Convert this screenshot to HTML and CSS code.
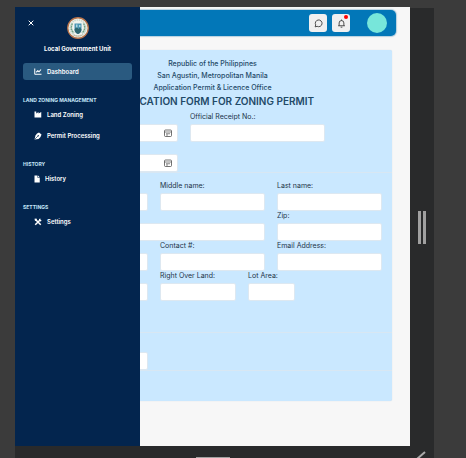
FILE: index.html
```html
<!DOCTYPE html>
<html lang="en">
<head>
<meta charset="utf-8">
<meta name="viewport" content="width=device-width, initial-scale=1">
<title>Zoning Permit</title>
<link rel="stylesheet" href="styles.css">
</head>
<body>
<div class="device">
  <div class="screen">
    <aside class="sidebar">
      <div class="brand">
        <button class="close" type="button" aria-label="Close menu">
          <svg viewBox="0 0 6 6" width="6" height="6"><path d="M.7.7l4.6 4.6M5.3.7L.7 5.3" stroke="#fff" stroke-width="1"/></svg>
        </button>
        <svg class="seal" viewBox="0 0 44 44" width="22" height="22">
          <circle cx="22" cy="22" r="20.5" fill="#f1f3ee" stroke="#b9744a" stroke-width="2.6"/>
          <circle cx="22" cy="22" r="16" fill="none" stroke="#c9d8cd" stroke-width="3" stroke-dasharray="3 1.5"/>
          <path d="M11 13c-4 7-3 14 3 19M33 13c4 7 3 14-3 19" fill="none" stroke="#6fa288" stroke-width="3" stroke-dasharray="4 1"/>
          <path d="M15 13h14v12c0 5-4 8-7 9-3-1-7-4-7-9z" fill="#4a95b4"/>
          <path d="M15 25l4-6 4 5 3-3 3 4c0 5-4 8-7 9-3-1-7-4-7-9z" fill="#2d6670"/>
          <path d="M18 15h3v6h-3zM24 16h3v4h-3z" fill="#a9d5df"/>
          <path d="M13 36c6 3 12 3 18 0" fill="none" stroke="#c3b69b" stroke-width="2"/>
        </svg>
        <span>Local Government Unit</span>
      </div>
      <nav class="menu">
        <a class="item active" href="#">
          <svg viewBox="0 0 16 14" width="8" height="7"><path d="M1.5 1v11.5H15" fill="none" stroke="#fff" stroke-width="2"/><path d="M4.5 8.5l3-3 2.5 2 4-4.5" fill="none" stroke="#fff" stroke-width="2.2"/></svg>
          Dashboard
        </a>
        <h2>LAND ZONING MANAGEMENT</h2>
        <a class="item" href="#">
          <svg viewBox="0 0 16 14" width="8" height="7"><path d="M1 1h3.500v4L9 2v3l5.500-3v11H1z" fill="#fff"/></svg>
          Land Zoning
        </a>
        <a class="item" href="#">
          <svg viewBox="0 0 16 16" width="8" height="8"><path d="M10 1l5 4-2 5-4 4-8 1L3 7l3-4z" fill="#fff"/><path d="M1.500 14.500L8 8" stroke="#03254e" stroke-width="1.300"/><circle cx="8.500" cy="7.500" r="1.300" fill="#03254e"/></svg>
          Permit Processing
        </a>
        <h2>HISTORY</h2>
        <a class="item" href="#">
          <svg viewBox="0 0 12 16" width="6" height="8"><path d="M1 1h6v4.500h4.500V15H1z" fill="#fff"/><path d="M8 1l3.500 3.500H8z" fill="#fff"/></svg>
          History
        </a>
        <h2>SETTINGS</h2>
        <a class="item" href="#">
          <svg viewBox="0 0 16 16" width="8" height="8"><path d="M3 3l10.500 10.500M13 3L2.500 13.500" stroke="#fff" stroke-width="3"/><path d="M1 1.500l4-.5 1 4-4 1zM10 2l3-1-1 3 3 0-1 3-4-1z" fill="#fff"/></svg>
          Settings
        </a>
      </nav>
    </aside>

    <main class="page">
      <header class="topbar">
        <button class="tool" type="button" aria-label="Messages">
          <svg viewBox="0 0 16 16" width="9" height="9"><path d="M2 14l1-3.500A6 6 0 1 1 5.500 13z" fill="none" stroke="#333" stroke-width="1.500" stroke-linejoin="round"/></svg>
        </button>
        <button class="tool" type="button" aria-label="Notifications">
          <svg viewBox="0 0 16 16" width="9" height="9"><path d="M2 12h12M3.800 12V7a4.200 4.200 0 0 1 8.400 0v5M6.500 14.500h3M8 1v2" fill="none" stroke="#333" stroke-width="1.500"/></svg>
          <i class="dot"></i>
        </button>
        <button class="avatar" type="button" aria-label="Account"></button>
      </header>

      <form class="card">
        <div class="letterhead">
          <p>Republic of the Philippines</p>
          <p>San Agustin, Metropolitan Manila</p>
          <p>Application Permit &amp; Licence Office</p>
          <h1>APPLICATION FORM FOR ZONING PERMIT</h1>
        </div>
        <section class="receipt">
          <div class="field">
            <div class="date"><input type="text" aria-label="Date"><svg viewBox="0 0 16 16" width="8" height="8"><rect x="1" y="2" width="14" height="13" rx="2" fill="none" stroke="#444" stroke-width="1.500"/><path d="M1 6h14M4 9.500h8M4 12h4" stroke="#444" stroke-width="1.300"/></svg></div>
          </div>
          <div class="field"><label for="receipt">Official Receipt No.:</label><input id="receipt" type="text"></div>
          <div class="field">
            <div class="date"><input type="text" aria-label="Date issued"><svg viewBox="0 0 16 16" width="8" height="8"><rect x="1" y="2" width="14" height="13" rx="2" fill="none" stroke="#444" stroke-width="1.500"/><path d="M1 6h14M4 9.500h8M4 12h4" stroke="#444" stroke-width="1.300"/></svg></div>
          </div>
        </section>
        <section class="applicant">
          <div class="field"><input type="text" aria-label="First name"></div>
          <div class="field"><label for="middle">Middle name:</label><input id="middle" type="text"></div>
          <div class="field"><label for="last">Last name:</label><input id="last" type="text"></div>
          <div class="field wide"><input type="text" aria-label="Address"></div>
          <div class="field"><label for="zip">Zip:</label><input id="zip" type="text"></div>
          <div class="field"><input type="text" aria-label="Phone"></div>
          <div class="field"><label for="contact">Contact #:</label><input id="contact" type="text"></div>
          <div class="field"><label for="email">Email Address:</label><input id="email" type="text"></div>
          <div class="field"><input type="text" aria-label="Location"></div>
          <div class="land">
            <div class="field"><label for="right">Right Over Land:</label><input id="right" type="text"></div>
            <div class="field"><label for="lot">Lot Area:</label><input id="lot" type="text"></div>
          </div>
        </section>
        <section class="extra">
          <div class="field"><input type="text" aria-label="Remarks"></div>
        </section>
        <section class="actions"></section>
      </form>
    </main>
  </div>
  <div class="grip right"><i></i><i></i></div>
  <div class="grip bottom"><i></i></div>
  <div class="grip corner"><svg viewBox="0 0 12 12" width="12" height="12"><path d="M1 13L9 6" stroke="#aaa" stroke-width="2"/></svg></div>
</div>
</body>
</html>
```

FILE: styles.css
```css
* { box-sizing: border-box; }

body {
  margin: 0;
  background: #3b3b3b;
  font-family: Inter, "Liberation Sans", sans-serif;
  font-size: 7px;
  color: #1d3347;
}

h1, h2, p { margin: 0; }

button { border: 0; padding: 0; font: inherit; }

svg { display: block; flex: none; }

.device {
  display: grid;
  grid-template-columns: 1fr 24px;
  grid-template-rows: 1fr 12px;
  height: 100vh;
  padding: 7px 32px 0 15px;
}

.screen {
  position: relative;
  background: #f7f7f7;
  overflow: hidden;
}

/* Sidebar drawer */
.sidebar {
  position: absolute;
  inset: 0 auto 0 0;
  z-index: 2;
  width: 125px;
  padding: 10px 8px;
  background: #03254e;
  color: #fff;
  font-size: 6px;
}

.brand {
  position: relative;
  display: flex;
  flex-direction: column;
  align-items: center;
  gap: 5px;
  font-weight: 700;
  line-height: 10px;
}

.close {
  position: absolute;
  top: 3px;
  left: 5px;
  background: none;
}

.menu { display: flex; flex-direction: column; margin-top: 9px; }

.menu h2 {
  margin: 14px 0 0;
  font-size: 5px;
  font-weight: 700;
  line-height: 8px;
  color: #c5e6f8;
}

.item {
  display: flex;
  align-items: center;
  gap: 5px;
  height: 21px;
  padding-left: 11px;
  border-radius: 3px;
  color: #fff;
  font-weight: 600;
  text-decoration: none;
}

.item.active { height: 17px; margin-bottom: 2px; background: #2a5a80; }

/* Page */
.page { padding: 3px 14px 0; }

.topbar {
  display: flex;
  align-items: center;
  gap: 5px;
  justify-content: flex-end;
  height: 26px;
  padding-right: 9px;
  border-radius: 5px;
  background: #0277b8;
  box-shadow: 0 0 1px 1px #b4cfdf;
}

.tool {
  position: relative;
  display: grid;
  place-items: center;
  width: 18px;
  height: 18px;
  border-radius: 3px;
  background: #f0f0f0;
}

.dot {
  position: absolute;
  top: 1px;
  right: 2px;
  width: 4px;
  height: 4px;
  border-radius: 50%;
  background: #f00;
}

.avatar {
  width: 20px;
  height: 20px;
  margin-left: 12px;
  border-radius: 50%;
  background: #77e6da;
}

.card {
  margin: 14px 4px 0;
  padding-top: 8px;
  border-radius: 2px;
  background: #cae8ff;
  box-shadow: 0 0 1px #c5d5e2;
}

.letterhead {
  text-align: center;
  font-weight: 500;
  line-height: 12px;
  color: #1f4a68;
}

.letterhead h1 {
  font-size: 10px;
  font-weight: 600;
  line-height: 14px;
  white-space: nowrap;
}

.receipt, .applicant, .extra {
  display: grid;
  grid-template-columns: repeat(3, 1fr);
  column-gap: 12px;
  padding: 0 10px;
  border-bottom: 1px solid #d8e7f3;
}

.receipt { grid-template-columns: 3fr 3fr 1fr; padding-top: 4px; }
.receipt .field:nth-child(3) { grid-column: 1; }
.applicant { padding-top: 8px; padding-bottom: 31px; }
.extra { padding-top: 7px; }
.actions { height: 30px; }

.field {
  display: flex;
  flex-direction: column;
  justify-content: flex-end;
  height: 30px;
}

.field label {
  margin-bottom: 3px;
  line-height: 9px;
  font-weight: 400;
  white-space: nowrap;
}

.field input {
  width: 100%;
  height: 18px;
  padding: 0 4px;
  border: 1px solid #dde8f1;
  border-radius: 2px;
  background: #fff;
  font: inherit;
}

.wide { grid-column: span 2; }

.land {
  grid-column: span 2;
  display: grid;
  grid-template-columns: 76px 47px;
  column-gap: 12px;
}

.date { position: relative; }
.date input { display: block; }
.date svg { position: absolute; top: 5px; right: 6px; }

/* Resize grips around the screen */
.grip {
  display: flex;
  align-items: center;
  justify-content: center;
  background: #292a2b;
}

.right { gap: 2px; margin-top: 1px; }
.right i { width: 3px; height: 33px; background: #a0a0a0; }
.bottom { align-items: flex-end; }
.bottom i { width: 34px; height: 1px; background: #a0a0a0; }
```
